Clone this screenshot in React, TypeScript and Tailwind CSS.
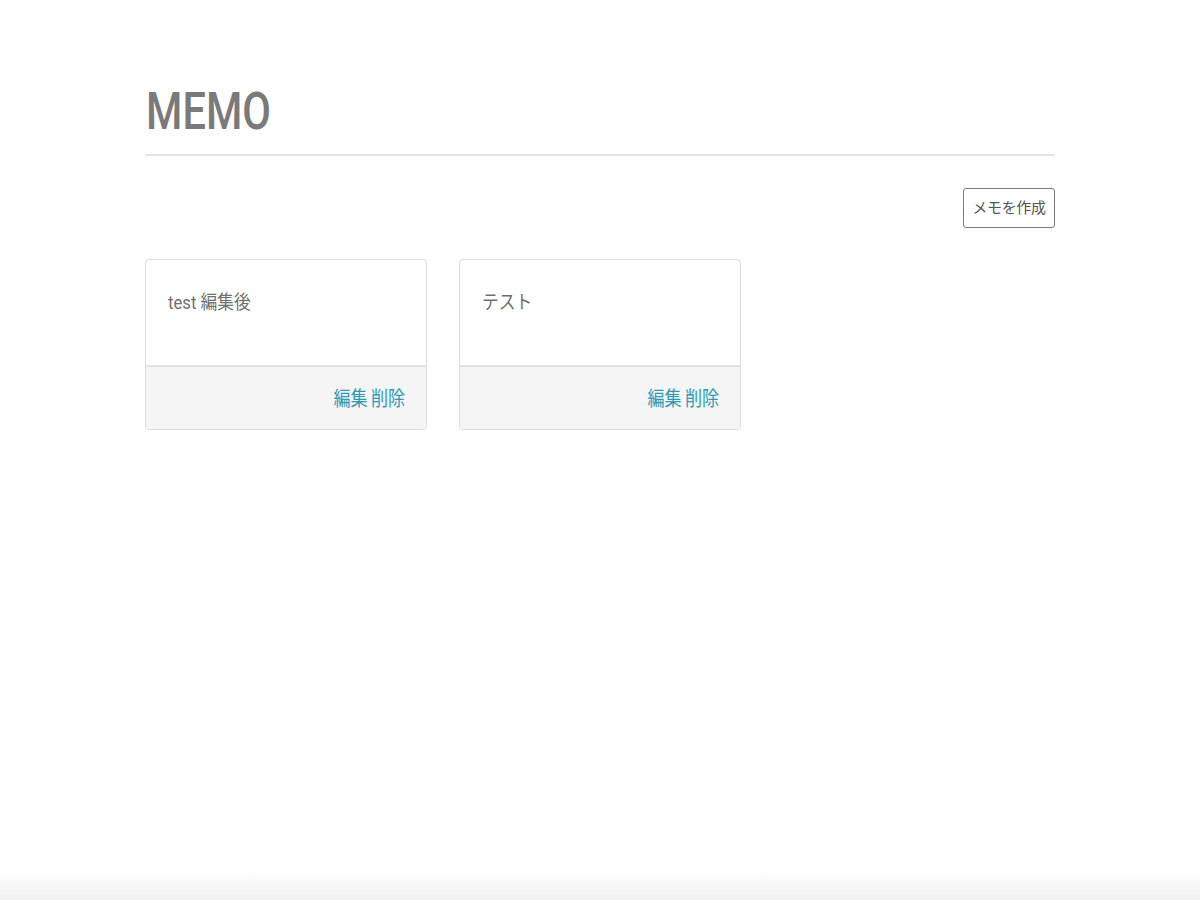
import React from "react";

const memos = [
  { id: 1, text: "test 編集後" },
  { id: 2, text: "テスト" },
];

export default function App() {
  return (
    <div
      className="relative min-h-screen bg-white"
      style={{ fontFamily: 'Roboto, "Noto Sans CJK JP", sans-serif' }}
    >
      <div className="mx-auto w-[910px] pt-[84px]">
        <h1 className="h-[56px] text-[52px] leading-[56px] font-medium text-[#7a7a7a] pl-[1px]">
          <span className="inline-block origin-left scale-x-[0.8]">MEMO</span>
        </h1>
        <div className="mt-[14px] h-[2px] bg-[#e6e6e6]" />
        <div className="mt-[32px] flex justify-end">
          <button className="h-[40px] w-[92px] rounded-[3px] border border-[#7a7a7a] bg-white text-[15px] text-[#555555] tracking-[-0.3px]">
            メモを作成
          </button>
        </div>
        <div className="mt-[31px] flex gap-[32px]">
          {memos.map((m) => (
            <div
              key={m.id}
              className="w-[282px] overflow-hidden rounded-[4px] border border-[#dddddd] bg-white"
            >
              <div className="h-[105px] px-[22px] pt-[31px] text-[19px] leading-[24px] text-[#6f6f6f]">
                <span className="inline-block origin-left scale-x-[0.88]">{m.text}</span>
              </div>
              <div className="flex h-[64px] items-center justify-end border-t-2 border-[#e3e3e3] bg-[#f5f5f5] px-[21px] pt-[1px] text-[20px] text-[#2a9bb4]">
                <span className="inline-flex origin-right scale-x-[0.85] gap-[4px]">
                  <a href="#" className="hover:underline">編集</a>
                  <a href="#" className="hover:underline">削除</a>
                </span>
              </div>
            </div>
          ))}
        </div>
      </div>
      <div className="absolute bottom-0 left-0 right-0 h-[30px] bg-gradient-to-b from-white to-[#f1f1f1]" />
    </div>
  );
}
